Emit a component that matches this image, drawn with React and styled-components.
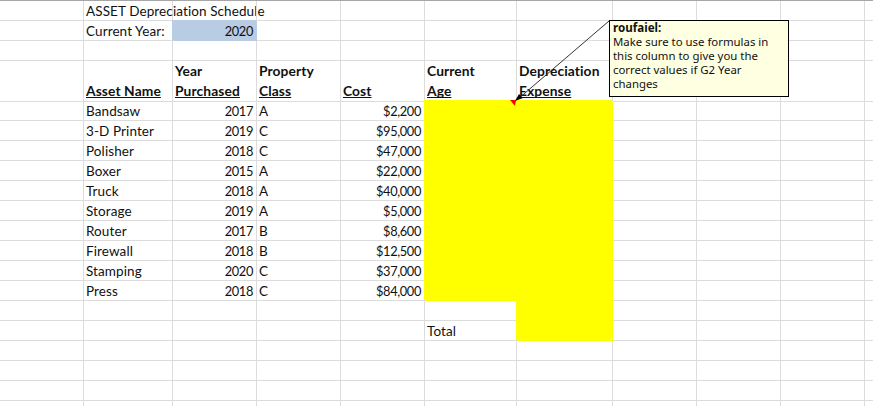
import React from 'react'
import styled, { createGlobalStyle } from 'styled-components'

const assets = [
  ['Bandsaw', '2017', 'A', '$2,200'],
  ['3-D Printer', '2019', 'C', '$95,000'],
  ['Polisher', '2018', 'C', '$47,000'],
  ['Boxer', '2015', 'A', '$22,000'],
  ['Truck', '2018', 'A', '$40,000'],
  ['Storage', '2019', 'A', '$5,000'],
  ['Router', '2017', 'B', '$8,600'],
  ['Firewall', '2018', 'B', '$12,500'],
  ['Stamping', '2020', 'C', '$37,000'],
  ['Press', '2018', 'C', '$84,000'],
]

const GlobalStyle = createGlobalStyle`
html, body {
  margin: 0;
  padding: 0;
  background: #fff;
  overflow: hidden;
}
`

const Sheet = styled.div`
  position: relative;
  width: 873px;
  height: 406px;
  overflow: hidden;
  border-top: 1px solid #a6a6a6;
  box-sizing: border-box;
  font-family: Lato, "Liberation Sans", sans-serif;
  font-size: 13.5px;
  letter-spacing: 0.1px;
  color: #111;
`

const Row = styled.div`
  display: grid;
  grid-template-columns: 84px 89px 84px 84px 84px 92px 96px 84px 84px 84px 10px;
  height: ${p => p.$h || 20}px;
`

const Cell = styled.div`
  box-sizing: border-box;
  border-right: 1px solid ${p => p.$fill || '#dcdcdc'};
  border-bottom: 1px solid ${p => p.$fill || '#dcdcdc'};
  background: ${p => p.$fill || 'transparent'};
  box-shadow: ${p => p.$fill ? `-1px -1px 0 0 ${p.$fill}` : 'none'};
  padding: 0 3px 0 2px;
  display: flex;
  align-items: flex-end;
  justify-content: ${p => p.$right ? 'flex-end' : 'flex-start'};
  line-height: 17px;
  white-space: nowrap;
`

const Num = styled.span`
  font-size: 12.8px;
  letter-spacing: -0.35px;
`

const HeaderCell = styled(Cell)`
  flex-direction: column;
  align-items: flex-start;
  justify-content: flex-end;
  font-size: 13.8px;
  font-weight: 700;
  line-height: 20px;
`

const HeaderLabel = styled.span`
  text-decoration: underline;
  text-decoration-thickness: 1px;
  text-underline-offset: 1px;
  text-decoration-skip-ink: none;
`

const Comment = styled.div`
  position: absolute;
  left: 609px;
  top: 19px;
  width: 180px;
  height: 77px;
  box-sizing: border-box;
  background: #ffffe1;
  border: 1px solid #000;
  padding: 0 3px;
  font-family: "Noto Sans", sans-serif;
  font-size: 11.4px;
  letter-spacing: 0;
  line-height: 14px;
  color: #111;
`

const Author = styled.div`
  font-size: 11.6px;
  font-weight: 700;
`

const Connector = styled.svg`
  position: absolute;
  left: 0;
  top: 0;
  pointer-events: none;
`

const Blank = ({ count }) => Array.from({ length: count }, (_, i) => <Cell key={i} />)

const Header = ({ top, bottom }) => (
  <HeaderCell>
    {top && <span>{top}</span>}
    <HeaderLabel>{bottom}</HeaderLabel>
  </HeaderCell>
)

export default function App() {
  return (
    <Sheet>
      <GlobalStyle />
      <Row>
        <Cell />
        <Cell>ASSET Depreciation Schedule</Cell>
        <Blank count={9} />
      </Row>
      <Row>
        <Cell />
        <Cell>Current Year:</Cell>
        <Cell $right $fill="#b8cce4"><Num>2020</Num></Cell>
        <Blank count={8} />
      </Row>
      <Row>
        <Blank count={11} />
      </Row>
      <Row $h={40}>
        <Cell />
        <Header bottom="Asset Name" />
        <Header top="Year" bottom="Purchased" />
        <Header top="Property" bottom="Class" />
        <Header bottom="Cost" />
        <Header top="Current" bottom="Age" />
        <Header top="Depreciation" bottom="Expense" />
        <Blank count={4} />
      </Row>
      {assets.map(([name, year, cls, cost]) => (
        <Row key={name}>
          <Cell />
          <Cell>{name}</Cell>
          <Cell $right><Num>{year}</Num></Cell>
          <Cell>{cls}</Cell>
          <Cell $right><Num>{cost}</Num></Cell>
          <Cell $fill="#ffff00" />
          <Cell $fill="#ffff00" />
          <Blank count={4} />
        </Row>
      ))}
      <Row>
        <Blank count={6} />
        <Cell $fill="#ffff00" />
        <Blank count={4} />
      </Row>
      <Row>
        <Blank count={5} />
        <Cell>Total</Cell>
        <Cell $fill="#ffff00" />
        <Blank count={4} />
      </Row>
      {[0, 1, 2, 3].map(i => (
        <Row key={i}>
          <Blank count={11} />
        </Row>
      ))}
      <Connector width="873" height="406">
        <polygon points="510,99 516,99 515,105" fill="#ff0000" />
        <line x1="609" y1="20" x2="518" y2="98" stroke="#333" strokeWidth="1" />
        <polygon points="515,100 519,93 523,97" fill="#000" />
      </Connector>
      <Comment>
        <Author>roufaiel:</Author>
        Make sure to use formulas in<br />
        this column to give you the<br />
        correct values if G2 Year<br />
        changes
      </Comment>
    </Sheet>
  )
}
